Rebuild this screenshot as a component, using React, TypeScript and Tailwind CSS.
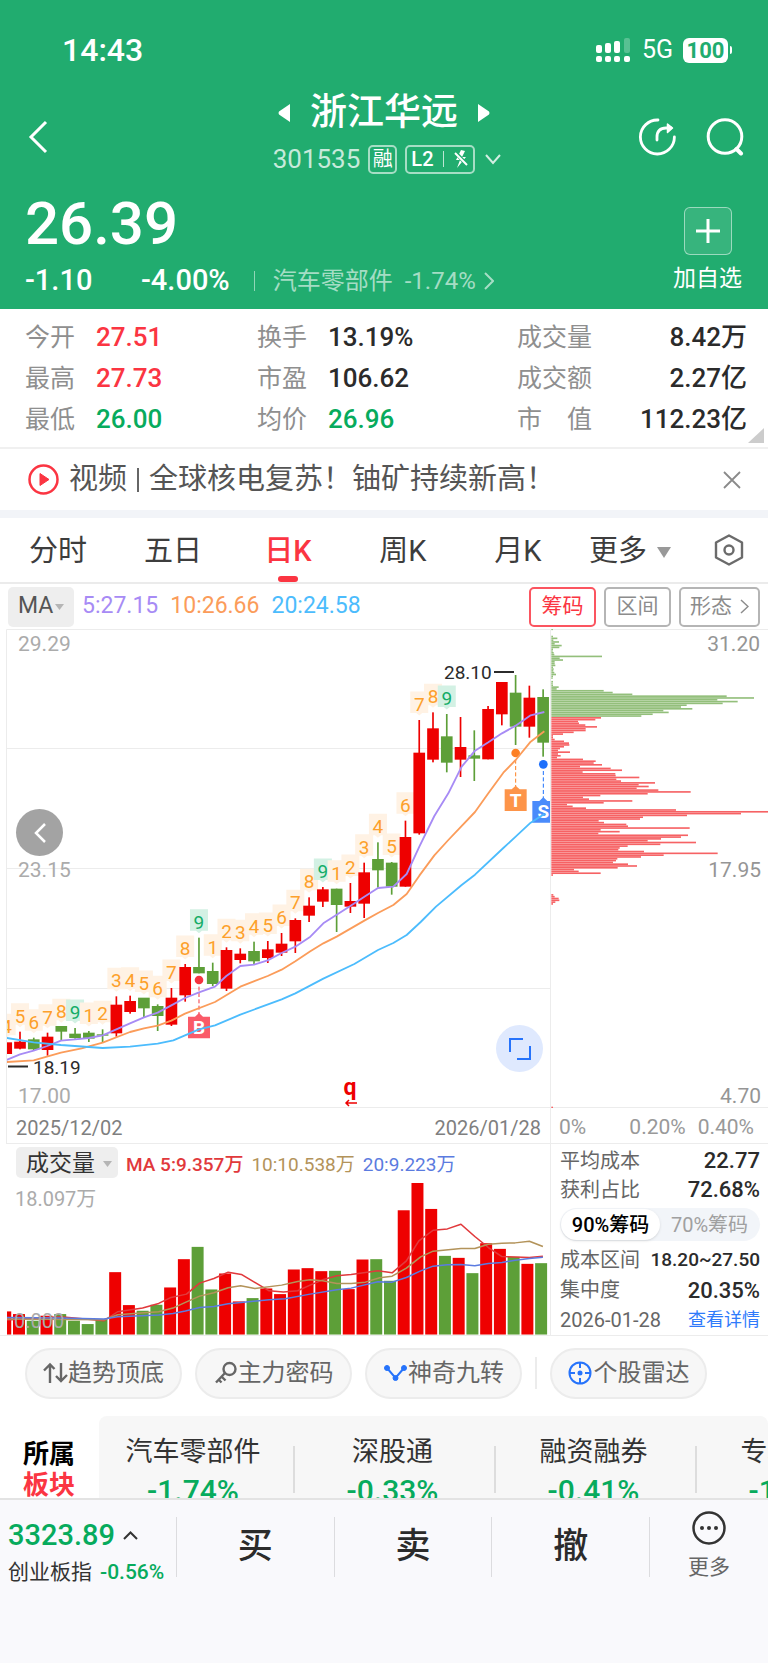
import { Fragment, useState } from "react";

type Dir = "up" | "down";

type Candle = {
  dir: Dir;
  high: number;
  top: number;
  bottom: number;
  low: number;
  vol: number;
  mark?: number;
};

// Chart geometry is stored at 3x resolution: [dir, high, top, bottom, low, volume top, sequence mark]
const RAW: [string, number, number, number, number, number, number?][] = [
  ["u", 1267, 1267, 1302, 1302, 632, 4],
  ["u", 1235, 1265, 1286, 1288, 640, 5],
  ["d", 1253, 1258, 1288, 1292, 660, 6],
  ["u", 1238, 1250, 1290, 1307, 645, 7],
  ["d", 1222, 1218, 1235, 1260, 640, 8],
  ["d", 1224, 1241, 1254, 1256, 660, 9],
  ["d", 1233, 1238, 1256, 1266, 670, 1],
  ["d", 1228, 1243, 1247, 1268, 657, 2],
  ["u", 1129, 1154, 1240, 1250, 514, 3],
  ["u", 1127, 1143, 1176, 1181, 613, 4],
  ["d", 1137, 1133, 1165, 1191, 630, 5],
  ["d", 1153, 1158, 1188, 1233, 612, 6],
  ["u", 1104, 1133, 1214, 1218, 560, 7],
  ["u", 1032, 1041, 1126, 1145, 475, 8],
  ["d", 953, 1041, 1060, 1060, 438, 9],
  ["d", 1028, 1053, 1092, 1098, 566, 1],
  ["u", 982, 990, 1106, 1113, 518, 2],
  ["u", 985, 1001, 1020, 1030, 602, 3],
  ["d", 965, 993, 1024, 1033, 592, 4],
  ["u", 963, 988, 1014, 1029, 563, 5],
  ["u", 939, 971, 998, 1008, 580, 6],
  ["u", 895, 900, 964, 999, 506, 7],
  ["u", 832, 857, 887, 906, 502, 8],
  ["u", 801, 808, 845, 861, 511, 9],
  ["d", 806, 806, 855, 936, 510, 1],
  ["u", 789, 843, 860, 879, 565, 2],
  ["u", 728, 757, 851, 894, 476, 3],
  ["d", 667, 717, 751, 803, 475, 4],
  ["d", 726, 728, 800, 824, 540, 5],
  ["u", 602, 651, 800, 800, 328, 6],
  ["u", 300, 398, 640, 644, 246, 7],
  ["u", 277, 325, 419, 427, 324, 8],
  ["d", 282, 349, 428, 457, 465, 9],
  ["u", 291, 381, 419, 471, 471],
  ["d", 331, 406, 416, 483, 517],
  ["u", 258, 267, 418, 418, 427],
  ["u", 186, 186, 283, 316, 444],
  ["d", 165, 218, 320, 375, 468],
  ["u", 197, 233, 320, 353, 489],
  ["d", 208, 231, 368, 410, 487],
];

const CANDLES: Candle[] = RAW.map(([d, high, top, bottom, low, vol, mark]) => ({
  dir: d === "u" ? "up" : "down",
  high,
  top,
  bottom,
  low,
  vol,
  mark,
}));

const STEP = 41.3;
const centerOf = (i: number) => 60 + (i - 1) * STEP;
const colorOf = (dir: Dir) => (dir === "up" ? "#ee0000" : "#5d9f38");

const PRICE_MA = [
  {
    color: "#a78bf5",
    points:
      "20,1320 60,1303 101,1292 142,1278 183,1262 225,1258 266,1254 308,1246 349,1228 390,1210 432,1192 473,1178 514,1156 555,1134 597,1117 645,1100 679,1068 721,1038 762,1034 803,1021 845,999 886,980 931,950 970,910 1010,884 1051,858 1093,830 1134,804 1180,800 1220,762 1258,680 1303,588 1345,520 1385,440 1425,392 1465,367 1506,340 1547,317 1592,286 1633,276",
  },
  {
    color: "#fb9c5a",
    points:
      "20,1326 101,1321 183,1298 245,1285 308,1268 390,1236 432,1225 473,1217 514,1202 555,1181 645,1146 721,1100 803,1068 845,1049 886,1024 931,994 970,970 1010,950 1093,902 1134,879 1180,855 1220,822 1258,767 1303,706 1345,660 1425,576 1465,520 1510,458 1547,420 1592,365 1633,334",
  },
  {
    color: "#4cbcfd",
    points:
      "20,1254 101,1267 183,1275 308,1284 390,1280 473,1271 520,1261 555,1246 597,1228 645,1216 721,1184 845,1138 886,1120 970,1076 1063,1032 1134,990 1180,969 1220,945 1262,906 1308,860 1385,795 1425,764 1510,684 1547,650 1592,608 1633,582",
  },
];

const VOLUME_MA = [
  {
    color: "#e1393c",
    points:
      "18,658 60,655 170,648 292,660 330,633 400,622 445,608 480,590 523,580 560,547 600,533 640,514 677,521 755,570 795,574 835,570 870,553 905,537 945,525 985,521 1060,510 1100,516 1140,480 1175,420 1215,388 1255,384 1293,370 1332,407 1370,440 1408,467 1485,470 1523,466",
  },
  {
    color: "#b3935a",
    points:
      "18,655 292,657 330,642 395,637 445,633 485,622 520,605 560,586 600,576 640,561 675,555 715,563 790,553 835,542 870,537 905,540 945,548 985,548 1025,544 1065,531 1100,526 1140,502 1180,468 1215,451 1293,443 1332,443 1370,430 1408,427 1445,426 1485,421 1523,437",
  },
  {
    color: "#5b7be0",
    points:
      "18,650 170,652 292,655 330,648 445,643 485,638 520,631 560,620 600,617 640,609 755,597 800,594 870,580 945,567 985,562 1060,543 1100,544 1140,530 1180,510 1215,496 1255,492 1293,491 1332,495 1370,488 1408,485 1445,478 1485,473 1523,469",
  },
];

const TAGS = [
  { letter: "B", x: 597, dot: 1080, top: 1190, color: "#fa5a68", dotColor: "#f5333f" },
  { letter: "T", x: 1547, dot: 399, top: 508, color: "#fd9449", dotColor: "#fd7f22" },
  { letter: "S", x: 1630, dot: 433, top: 543, color: "#4a8bfb", dotColor: "#1e70fb" },
];

// Share held at each price level, from the highest price down
const PROFIT_FROM = 49;
const CHIPS = [
  5, 0, 0, 0, 5, 18, 6, 23, 10, 31, 24, 5, 4, 7, 9, 152, 25, 35, 10, 10, 12, 5, 7, 6, 9, 14, 5, 4, 0, 5, 4, 5, 22, 16,
  157, 184, 243, 526, 608, 498, 559, 514, 406, 389, 423, 336, 352, 304, 270, 149, 132, 80, 83, 102, 137, 103, 103, 67,
  35, 5, 5, 10, 38, 53, 54, 38, 26, 20, 56, 20, 28, 17, 95, 133, 127, 152, 86, 178, 212, 94, 192, 193, 264, 195, 209,
  311, 262, 292, 256, 321, 418, 289, 147, 95, 113, 243, 157, 47, 64, 104, 374, 650, 569, 407, 275, 266, 142, 158, 225,
  230, 415, 148, 205, 141, 410, 389, 329, 289, 434, 327, 229, 205, 201, 278, 499, 337, 269, 198, 194, 185, 230, 257,
  199, 68, 82, 148, 5, 0, 0, 0, 0, 0, 0, 0, 0, 0, 0, 6, 10, 22, 24, 12, 5,
];

const QUOTES = [
  { label: "今开", value: "27.51", tone: "text-[#fb3542]" },
  { label: "换手", value: "13.19%", tone: "text-[#2b2b2b]" },
  { label: "成交量", value: "8.42万", tone: "text-[#2b2b2b]" },
  { label: "最高", value: "27.73", tone: "text-[#fb3542]" },
  { label: "市盈", value: "106.62", tone: "text-[#2b2b2b]" },
  { label: "成交额", value: "2.27亿", tone: "text-[#2b2b2b]" },
  { label: "最低", value: "26.00", tone: "text-[#07ab5d]" },
  { label: "均价", value: "26.96", tone: "text-[#07ab5d]" },
  { label: "市　值", value: "112.23亿", tone: "text-[#2b2b2b]" },
];

const TABS = ["分时", "五日", "日K", "周K", "月K"];

const SECTORS = [
  { name: "汽车零部件", change: "-1.74%" },
  { name: "深股通", change: "-0.33%" },
  { name: "融资融券", change: "-0.41%" },
  { name: "专精特新", change: "-1.05%" },
];

function StatusBar() {
  return (
    <div className="flex h-7 items-center justify-between pl-[62px] pr-9">
      <span className="text-[32px] font-medium leading-7">14:43</span>
      <div className="flex items-center">
        <svg width="34" height="25" viewBox="0 0 34 25" fill="currentColor" aria-label="signal">
          <rect x="0" y="7" width="6" height="8" rx="2" />
          <rect x="9" y="5" width="6" height="10" rx="2" />
          <rect x="18" y="3" width="6" height="12" rx="2" />
          <rect x="28" y="0" width="6" height="15" rx="2" opacity="0.25" />
          <rect x="0" y="18" width="6" height="6" rx="2" />
          <rect x="9" y="18" width="6" height="6" rx="2" />
          <rect x="18" y="18" width="6" height="6" rx="2" />
          <rect x="28" y="18" width="6" height="6" rx="2" />
        </svg>
        <span className="ml-3 text-[25px] leading-7">5G</span>
        <span className="ml-2.5 flex h-[25px] w-[45px] items-center justify-center rounded-md bg-white text-[22px] font-bold text-[#21ac6f]">
          100
        </span>
        <span className="ml-0.5 h-2 w-0.5 rounded-r-full bg-white" />
      </div>
    </div>
  );
}

function Header() {
  return (
    <header className="bg-[#21ac6f] pb-[13px] pt-9 text-white">
      <StatusBar />
      <div className="mt-6 grid grid-cols-[1fr_auto_1fr] items-center">
        <button type="button" aria-label="返回" className="ml-7 mt-2 w-5">
          <svg width="20" height="34" viewBox="0 0 20 34" fill="none" stroke="currentColor" strokeWidth="3">
            <path d="M18 2 L3 17 L18 32" />
          </svg>
        </button>
        <div className="flex flex-col items-center gap-2.5 py-1">
          <div className="flex items-center gap-5">
            <button type="button" aria-label="上一只">
              <svg width="12" height="18" viewBox="0 0 12 18" fill="currentColor">
                <path d="M12 0 V18 L1 10.500 Q0 9 1 7.500Z" />
              </svg>
            </button>
            <h1 className="text-[37px] font-medium leading-[42px]">浙江华远</h1>
            <button type="button" aria-label="下一只">
              <svg width="12" height="18" viewBox="0 0 12 18" fill="currentColor">
                <path d="M0 0 V18 L11 10.500 Q12 9 11 7.500Z" />
              </svg>
            </button>
          </div>
          <div className="flex h-[30px] items-center pl-1.5">
            <span className="text-[26px] text-white/75">301535</span>
            <span className="ml-2 flex size-[29px] items-center justify-center rounded-[5px] border-2 border-white/60 text-[20px]">
              融
            </span>
            <span className="ml-2 flex h-[29px] w-[70px] items-center justify-between rounded-[5px] border-2 border-white/60 px-1 text-[20px] font-medium">
              L2
              <span className="h-4 w-px bg-white/70" />
              <svg width="16" height="18" viewBox="0 0 16 18" fill="currentColor">
                <path d="M8 0 L3 10 H7 L4 18 L13 7 H9 L12 1Z" />
                <path d="M2 2 L14 15" stroke="#21ac6f" strokeWidth="4" />
                <path d="M2 3 L14 15" stroke="currentColor" strokeWidth="2" />
              </svg>
            </span>
            <svg className="ml-2.5" width="16" height="11" viewBox="0 0 16 11" fill="none" stroke="currentColor" strokeWidth="2" opacity="0.8">
              <path d="M1 1 L8 9 L15 1" />
            </svg>
          </div>
        </div>
        <div className="mr-6 mt-2 flex items-center justify-end gap-[30px]">
          <button type="button" aria-label="分享">
            <svg width="37" height="38" viewBox="0 0 37 38" fill="none" stroke="currentColor" strokeWidth="2.8" strokeLinecap="round">
              <path d="M19 2 A17 17 0 1 0 35.400 19" />
              <path d="M18 22 V19 Q18 10 27 10 H32" />
              <path d="M28.500 6 L33.500 10 L28.500 14.500 Z" fill="currentColor" strokeWidth="1.500" strokeLinejoin="round" />
            </svg>
          </button>
          <button type="button" aria-label="搜索">
            <svg width="38" height="38" viewBox="0 0 38 38" fill="none" stroke="currentColor" strokeLinecap="round">
              <circle cx="19" cy="18.500" r="16.800" strokeWidth="3" />
              <path d="M30.500 31 L35 35.500" strokeWidth="4" />
            </svg>
          </button>
        </div>
      </div>
      <div className="flex justify-between pl-[25px] pr-[26px]">
        <div>
          <div className="pt-1 text-[60px] font-medium leading-[84px]">26.39</div>
          <div className="flex h-[30px] items-center text-[29px] font-medium">
            <span className="w-[116px]">-1.10</span>
            <span>-4.00%</span>
            <span className="ml-6 h-5 w-px bg-white/50" />
            <a href="#sector" className="ml-[18px] flex items-center gap-3 text-[24px] font-normal text-white/60">
              <span>汽车零部件</span>
              <span className="flex items-center gap-2">
                -1.74%
                <svg width="10" height="18" viewBox="0 0 10 18" fill="none" stroke="currentColor" strokeWidth="2">
                  <path d="M1 1 L9 9 L1 17" />
                </svg>
              </span>
            </a>
          </div>
        </div>
        <button type="button" className="mt-[29px] flex flex-col items-center gap-3">
          <span className="flex size-12 items-center justify-center rounded-md border border-white/50 bg-white/10">
            <svg width="24" height="24" viewBox="0 0 24 24" stroke="currentColor" strokeWidth="3">
              <path d="M12 0 V24 M0 12 H24" />
            </svg>
          </span>
          <span className="text-[23px] leading-6">加自选</span>
        </button>
      </div>
    </header>
  );
}

function Quotes() {
  return (
    <section className="relative border-b-2 border-[#f0f0f0] px-[25px] pb-[7px] pt-2">
      <dl className="grid grid-cols-[232fr_260fr_226fr]">
        {QUOTES.map((q, i) => (
          <div key={q.label} className="flex h-[41px] items-center text-[25px]">
            <dt className="mr-[21px] text-[#8f8f8f]">{q.label}</dt>
            <dd className={`${q.tone} ${i % 3 === 2 ? "ml-auto -mr-1" : ""} whitespace-nowrap text-[26px] font-medium`}>
              {q.value}
            </dd>
          </div>
        ))}
      </dl>
      <svg className="absolute bottom-1 right-1" width="16" height="15" viewBox="0 0 16 15" fill="#cccccc">
        <path d="M16 0 V15 H0Z" />
      </svg>
    </section>
  );
}

function NewsBar() {
  return (
    <section className="flex h-[61px] items-center pl-7 pr-[27px]">
      <svg width="31" height="31" viewBox="0 0 31 31" fill="none">
        <circle cx="15.500" cy="15.500" r="14" stroke="#fb3542" strokeWidth="2.500" />
        <path d="M12 9.500 L21 15.500 L12 21.500Z" fill="#fb3542" stroke="#fb3542" strokeLinejoin="round" />
      </svg>
      <a href="#news" className="ml-2.5 flex items-center text-[29px] text-[#555555]">
        视频
        <span className="mx-2.5 h-6 w-0.5 bg-[#666666]" />
        全球核电复苏！铀矿持续新高！
      </a>
      <button type="button" aria-label="关闭" className="ml-auto">
        <svg width="18" height="18" viewBox="0 0 18 18" stroke="#8a8a8a" strokeWidth="1.800">
          <path d="M1 1 L17 17 M17 1 L1 17" />
        </svg>
      </button>
    </section>
  );
}

function PeriodTabs() {
  const [active, setActive] = useState("日K");

  return (
    <nav className="flex h-[66px] items-stretch border-b-2 border-[#ebebeb] pl-[29px] pr-6 text-[29px] text-[#3d3d3d]">
      <div className="mr-[42px] flex flex-1 justify-between">
        {TABS.map((tab) => (
          <button
            key={tab}
            type="button"
            onClick={() => setActive(tab)}
            className={
              tab === active
                ? "relative w-[58px] whitespace-nowrap pt-1 font-medium text-[#fb3542]"
                : "relative w-[58px] whitespace-nowrap pt-1"
            }
          >
            {tab}
            {tab === active ? (
              <span className="absolute bottom-0 left-1/2 h-1.5 w-5 -translate-x-1/2 rounded-full bg-[#fb3542]" />
            ) : null}
          </button>
        ))}
      </div>
      <button type="button" className="flex items-center gap-2.5 whitespace-nowrap pt-1">
        更多
        <svg width="14" height="11" viewBox="0 0 14 11" fill="#999999">
          <path d="M0 0 H14 L7 11Z" />
        </svg>
      </button>
      <button type="button" aria-label="设置" className="ml-[43px]">
        <svg width="30" height="32" viewBox="0 0 30 32" fill="none" stroke="#6b6b6b" strokeWidth="2.400" strokeLinejoin="round">
          <path d="M15 1.500 L28 8.500 V23.500 L15 30.500 L2 23.500 V8.500Z" />
          <circle cx="15" cy="16" r="4.500" />
        </svg>
      </button>
    </nav>
  );
}

function IndicatorBar() {
  return (
    <div className="flex h-[45px] items-center justify-between px-2">
      <div className="flex items-center text-[23px]">
        <div className="relative">
          <select
            aria-label="主图指标"
            className="h-10 w-[66px] appearance-none rounded-[5px] bg-[#eeeeee] pl-2.5 text-[#555555]"
          >
            <option>MA</option>
            <option>BOLL</option>
          </select>
          <svg className="pointer-events-none absolute right-2.5 top-[17px]" width="9" height="6" viewBox="0 0 9 6" fill="#b5b5b5">
            <path d="M0 0 H9 L4.500 6Z" />
          </svg>
        </div>
        <span className="ml-2 text-[#a78bf5]">5:27.15</span>
        <span className="ml-3 text-[#fb9c5a]">10:26.66</span>
        <span className="ml-3 text-[#4cbcfd]">20:24.58</span>
      </div>
      <div className="flex gap-2 text-[21px] text-[#8c8c8c]">
        <button type="button" className="h-10 w-[67px] rounded-[5px] border-2 border-[#fb5560] text-[#fb3542]">
          筹码
        </button>
        <button type="button" className="h-10 w-[67px] rounded-[5px] border-2 border-[#b5b5b5]">
          区间
        </button>
        <button
          type="button"
          className="flex h-10 w-[81px] items-center justify-center gap-2 whitespace-nowrap rounded-[5px] border-2 border-[#b5b5b5]"
        >
          形态
          <svg width="9" height="15" viewBox="0 0 9 15" fill="none" stroke="currentColor" strokeWidth="1.500">
            <path d="M1 1 L8 7.500 L1 14" />
          </svg>
        </button>
      </div>
    </div>
  );
}

function MarkLabel({ x, high, mark }: { x: number; high: number; mark: number }) {
  const nine = mark === 9;
  return (
    <g transform={`translate(${x / 3} ${(high - 27) / 3})`}>
      <path d="M-9 -28.500 H9 V-7 H3 L0 -4.500 L-3 -7 H-9Z" fill={nine ? "#d3f1e4" : "#fff2e4"} />
      <text y="-9" textAnchor="middle" fontSize="19" fill={nine ? "#14ac67" : "#fda02a"}>
        {mark}
      </text>
    </g>
  );
}

function CandleChart() {
  return (
    <div className="relative">
      <svg viewBox="0 0 551 479" className="block w-full">
        <defs>
          <clipPath id="plot">
            <rect x="7" y="0" width="543" height="479" />
          </clipPath>
        </defs>
        <path d="M6.500 479 V0.500 H550.500 V479 M7 119.500 H550 M7 239.500 H550 M7 359.500 H550 M7 478.500 H551" fill="none" stroke="#ececec" />
        <g clipPath="url(#plot)">
          {CANDLES.map((c, i) =>
            c.mark ? <MarkLabel key={i} x={i === 0 ? 20 : centerOf(i)} high={c.high} mark={c.mark} /> : null,
          )}
          <g transform="scale(0.333333) translate(0 -27)">
            {CANDLES.map((c, i) => (
              <Fragment key={i}>
                <rect x={centerOf(i) - 2.5} y={c.high} width="5" height={c.low - c.high} fill={colorOf(c.dir)} />
                <rect x={centerOf(i) - 17.5} y={c.top} width="35" height={c.bottom - c.top} fill={colorOf(c.dir)} />
              </Fragment>
            ))}
            {TAGS.map((t) => (
              <g key={t.letter}>
                <circle cx={t.x} cy={t.dot} r="13" fill={t.dotColor} />
                <path d={`M${t.x} ${t.dot + 20} V${t.top - 6}`} stroke={t.dotColor} strokeWidth="3" strokeDasharray="12 7" />
                <path
                  d={`M${t.x - 33} ${t.top} H${t.x - 12} L${t.x} ${t.top - 11} L${t.x + 12} ${t.top} H${t.x + 33} V${t.top + 65} H${t.x - 33}Z`}
                  fill={t.color}
                />
              </g>
            ))}
          </g>
          {TAGS.map((t) => (
            <text
              key={t.letter}
              x={t.x / 3}
              y={(t.top + 25) / 3}
              textAnchor="middle"
              fontSize="19"
              fontWeight="700"
              fill="#ffffff"
            >
              {t.letter}
            </text>
          ))}
          <g transform="scale(0.333333) translate(0 -27)" fill="none" strokeWidth="5.500" strokeLinejoin="round">
            {PRICE_MA.map((line) => (
              <polyline key={line.color} points={line.points} stroke={line.color} />
            ))}
          </g>
        </g>
        <g fontSize="21" fill="#ababab">
          <text x="18" y="22">29.29</text>
          <text x="18" y="248">23.15</text>
          <text x="18" y="474">17.00</text>
        </g>
        <g fontSize="19" fill="#2b2b2b">
          <text x="444" y="50">28.10</text>
          <text x="33" y="445">18.19</text>
          <path d="M494 43 H514 M8 437.500 H28" stroke="#2b2b2b" strokeWidth="2" />
        </g>
        <text x="350" y="466" textAnchor="middle" fontSize="23" fontWeight="700" fill="#ee0000">
          q
        </text>
        <path d="M357 474 H346 M349 471 L346 474 L349 477" fill="none" stroke="#ee0000" strokeWidth="1.500" />
      </svg>
      <button
        type="button"
        aria-label="向左"
        className="absolute left-4 top-[180px] flex size-[47px] items-center justify-center rounded-full bg-[#a3a3a3]"
      >
        <svg width="12" height="20" viewBox="0 0 12 20" fill="none" stroke="#ffffff" strokeWidth="2.500">
          <path d="M11 1 L2 10 L11 19" />
        </svg>
      </button>
      <button
        type="button"
        aria-label="全屏"
        className="absolute bottom-9 right-2 flex size-[47px] items-center justify-center rounded-full bg-[#dfe9fe]"
      >
        <svg width="22" height="22" viewBox="0 0 22 22" fill="none" stroke="#2673fb" strokeWidth="2">
          <path d="M1 14 V1 H14 M8 21 H21 V8" />
        </svg>
      </button>
    </div>
  );
}

function ChipChart() {
  return (
    <svg viewBox="0 0 217 479" className="block w-full">
      <path d="M0 0.500 H217 M0 478.500 H217" stroke="#ececec" />
      <g transform="scale(0.333333) translate(0 -27)">
        {CHIPS.map((len, i) => (
          <rect
            key={i}
            x="1"
            y={25.5 + i * 5.42}
            width={len}
            height="4.900"
            fill={i < PROFIT_FROM ? "#93bf7b" : "#f66264"}
          />
        ))}
        <rect x="1" y="1460" width="5" height="5" fill="#f66264" />
      </g>
      <g fontSize="21" fill="#959595" textAnchor="end">
        <text x="209" y="22">31.20</text>
        <text x="210" y="248">17.95</text>
        <text x="210" y="474">4.70</text>
      </g>
    </svg>
  );
}

function VolumeChart() {
  return (
    <div className="border-b border-r border-[#ececec]">
      <div className="flex h-9 items-center pl-4 pt-0.5 text-[19px]">
        <div className="relative">
          <select
            aria-label="副图指标"
            className="h-[31px] w-[102px] appearance-none rounded-[5px] bg-[#eeeeee] pl-2.5 text-[23px] text-[#333333]"
          >
            <option>成交量</option>
            <option>成交额</option>
          </select>
          <svg className="pointer-events-none absolute right-1.5 top-3.5" width="9" height="6" viewBox="0 0 9 6" fill="#b5b5b5">
            <path d="M0 0 H9 L4.500 6Z" />
          </svg>
        </div>
        <span className="ml-2 pt-1 font-medium text-[#e1393c]">MA 5:9.357万</span>
        <span className="ml-2 pt-1 text-[#b3935a]">10:10.538万</span>
        <span className="ml-2 pt-1 text-[#5b7be0]">20:9.223万</span>
      </div>
      <svg viewBox="0 0 551 155" className="block w-full">
        <defs>
          <clipPath id="volume">
            <rect x="7" y="0" width="543" height="155" />
          </clipPath>
        </defs>
        <g clipPath="url(#volume)">
          {CANDLES.map((c, i) => (
            <rect
              key={i}
              x={centerOf(i) / 3 - 7}
              y={c.vol / 3 - 79}
              width="12"
              height={(702 - c.vol) / 3}
              fill={colorOf(c.dir)}
            />
          ))}
          <g transform="scale(0.357143 0.333333) translate(0 -237)" fill="none" strokeWidth="4.500" strokeLinejoin="round">
            {VOLUME_MA.map((line) => (
              <polyline key={line.color} points={line.points} stroke={line.color} />
            ))}
          </g>
        </g>
        <g fontSize="20" fill="#ababab">
          <text x="15" y="26">18.097万</text>
          <text x="14" y="148">0.000</text>
        </g>
      </svg>
    </div>
  );
}

function ChipStats() {
  const [range, setRange] = useState("90");
  const on = "flex-1 whitespace-nowrap rounded-full bg-white font-medium text-black shadow-sm";
  const off = "flex-1 whitespace-nowrap rounded-full text-[#a0a0a0]";

  return (
    <div className="flex flex-col border-b border-[#ececec] pl-[9px] pr-2 pt-0.5 text-[20px] text-[#666666]">
      <div className="flex h-[29px] items-center justify-between">
        <span>平均成本</span>
        <span className="text-[22px] font-medium text-[#2b2b2b]">22.77</span>
      </div>
      <div className="flex h-[29px] items-center justify-between">
        <span>获利占比</span>
        <span className="text-[22px] font-medium text-[#2b2b2b]">72.68%</span>
      </div>
      <div className="my-1 flex h-[33px] items-stretch rounded-full bg-[#f2f5f9] p-px text-[20px]">
        <button type="button" className={range === "90" ? on : off} onClick={() => setRange("90")}>
          90%筹码
        </button>
        <button type="button" className={range === "70" ? on : off} onClick={() => setRange("70")}>
          70%筹码
        </button>
      </div>
      <div className="flex h-[30px] items-center justify-between whitespace-nowrap">
        <span>成本区间</span>
        <span className="text-[19px] font-medium text-[#2b2b2b]">18.20~27.50</span>
      </div>
      <div className="flex h-[30px] items-center justify-between">
        <span>集中度</span>
        <span className="text-[22px] font-medium text-[#2b2b2b]">20.35%</span>
      </div>
      <div className="flex h-[29px] items-center justify-between">
        <span>2026-01-28</span>
        <a href="#details" className="text-[18px] text-[#2f7bfb]">
          查看详情
        </a>
      </div>
    </div>
  );
}

function Tools() {
  const pill =
    "flex h-[51px] w-[157px] shrink-0 items-center justify-center whitespace-nowrap rounded-full border-2 border-[#ececec] bg-[#f7f7f7] text-[24px] text-[#666666]";

  return (
    <div className="flex items-center gap-[13px] overflow-hidden pb-[17px] pl-[25px] pt-3">
      <button type="button" className={pill}>
        <svg width="25" height="22" viewBox="0 0 25 22" fill="none" stroke="currentColor" strokeWidth="2.400">
          <path d="M7 21 V3 M1 8.500 L7 2.500 L11.500 7 M18 1 V19 M13 14 L18 19 L24 13" />
        </svg>
        趋势顶底
      </button>
      <button type="button" className={pill}>
        <svg width="24" height="24" viewBox="0 0 24 24" fill="none" stroke="currentColor" strokeWidth="2.400">
          <circle cx="15.500" cy="8" r="6" />
          <path d="M11 12 L2 21.500 M7.500 15.500 L11.500 19.500 M4.500 18.500 L7.500 21.500" />
        </svg>
        主力密码
      </button>
      <button type="button" className={pill}>
        <svg width="25" height="22" viewBox="0 0 25 22" fill="#2673fb" stroke="#2673fb">
          <path d="M4 6 L12.500 16 L21 6" fill="none" strokeWidth="2" />
          <circle cx="4" cy="6" r="2.500" />
          <circle cx="12.500" cy="16" r="2.500" />
          <circle cx="21" cy="6" r="2.500" />
        </svg>
        神奇九转
      </button>
      <span className="h-8 w-0.5 shrink-0 bg-[#ececec]" />
      <button type="button" className={pill}>
        <svg className="mr-0.5" width="24" height="24" viewBox="0 0 24 24" fill="none" stroke="#2673fb" strokeWidth="2">
          <circle cx="12" cy="12" r="10.500" />
          <circle cx="12" cy="12" r="1.500" fill="#2673fb" />
          <path d="M12 1 V7 M12 17 V23 M1 12 H7 M17 12 H23" />
        </svg>
        个股雷达
      </button>
    </div>
  );
}

function Sectors() {
  return (
    <section id="sector" className="flex h-[82px] overflow-hidden">
      <h2 className="w-[99px] shrink-0 pl-[23px] pt-[23px] text-[26px] font-bold leading-[31px] text-black">
        所属
        <br />
        <span className="text-[#fb3542]">板块</span>
      </h2>
      <ul className="flex flex-1 overflow-hidden rounded-tl-lg rounded-tr-lg bg-[#f7f7f7]">
        {SECTORS.map((s, i) => (
          <li key={s.name} className="flex shrink-0 items-start">
            {i > 0 ? <span className="mt-[30px] h-[47px] w-0.5 bg-[#dddddd]" /> : null}
            <a
              href="#sector"
              className={
                i > 0
                  ? "flex w-[199px] flex-col items-center gap-[7px] pr-1 pt-5 text-[27px] leading-8 text-[#333333]"
                  : "flex w-[194px] flex-col items-center gap-[7px] pr-1.5 pt-5 text-[27px] leading-8 text-[#333333]"
              }
            >
              {s.name}
              <span className="text-[30px] font-medium text-[#07ab5d]">{s.change}</span>
            </a>
          </li>
        ))}
      </ul>
    </section>
  );
}

function TradeBar() {
  return (
    <footer className="flex items-start border-t-2 border-[#e3e3e3] bg-[#f9f9fc] pb-[86px] pt-[17px]">
      <a href="#index" className="flex h-[60px] w-[176px] shrink-0 flex-col whitespace-nowrap pl-2">
        <span className="flex h-[38px] items-center gap-2 text-[29px] font-medium text-[#07ab5d]">
          3323.89
          <svg width="15" height="9" viewBox="0 0 15 9" fill="none" stroke="#333333" strokeWidth="2">
            <path d="M1 8 L7.500 1.500 L14 8" />
          </svg>
        </span>
        <span className="mt-1 flex h-7 items-center gap-2 text-[21px] text-[#333333]">
          创业板指 <span className="font-medium text-[#07ab5d]">-0.56%</span>
        </span>
      </a>
      <div className="grid flex-1 grid-cols-3 text-[35px] font-medium text-[#2b2b2b]">
        <button type="button" className="h-[60px] border-l border-[#dcdcdf] pt-0.5">买</button>
        <button type="button" className="h-[60px] border-l border-[#dcdcdf] pt-0.5">卖</button>
        <button type="button" className="h-[60px] border-l border-[#dcdcdf] pt-0.5">撤</button>
      </div>
      <button
        type="button"
        className="flex h-[60px] w-[119px] shrink-0 flex-col items-center border-l border-[#dcdcdf] text-[21px] text-[#666666]"
      >
        <svg className="-mt-1.5 shrink-0" width="34" height="34" viewBox="0 0 34 34" fill="#333333">
          <circle cx="17" cy="17" r="15.500" fill="none" stroke="#333333" strokeWidth="2.500" />
          <circle cx="10" cy="17" r="2" />
          <circle cx="17" cy="17" r="2" />
          <circle cx="24" cy="17" r="2" />
        </svg>
        <span className="mt-2 leading-7">更多</span>
      </button>
    </footer>
  );
}

export default function App() {
  return (
    <div className="w-full overflow-x-hidden bg-white font-[Roboto,'Noto_Sans_CJK_SC',sans-serif]">
      <Header />
      <main>
        <Quotes />
        <NewsBar />
        <div className="h-2 bg-[#f2f4f8]" />
        <PeriodTabs />
        <IndicatorBar />
        <div className="grid grid-cols-[551fr_217fr]">
          <CandleChart />
          <ChipChart />
          <div className="ml-1.5 flex h-9 items-center justify-between border-x border-b border-[#ececec] px-[9px] pt-1 text-[20px] text-[#7f7f7f]">
            <span>2025/12/02</span>
            <span>2026/01/28</span>
          </div>
          <div className="flex h-9 items-center border-b border-[#ececec] pl-2 pr-3.5 pt-1 text-[21px] text-[#999999]">
            <span>0%</span>
            <span className="ml-auto">0.20%</span>
            <span className="ml-3">0.40%</span>
          </div>
          <VolumeChart />
          <ChipStats />
        </div>
        <Tools />
        <Sectors />
      </main>
      <TradeBar />
    </div>
  );
}
